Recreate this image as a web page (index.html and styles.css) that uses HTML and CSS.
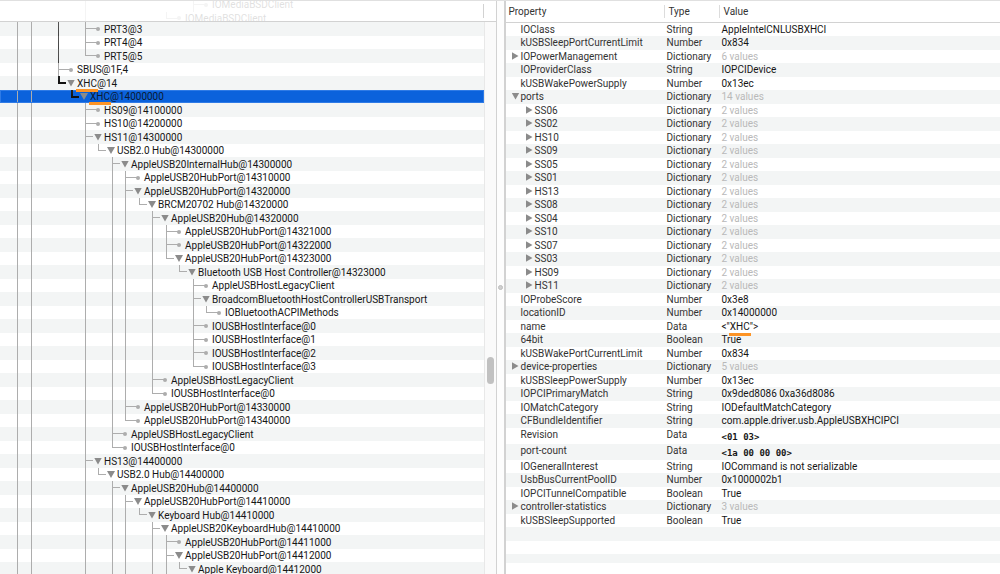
FILE: index.html
```html
<!DOCTYPE html>
<html lang="en">
<head>
<meta charset="utf-8">
<title>Registry Explorer</title>
<link rel="stylesheet" href="styles.css">
</head>
<body>
<main class="app">
  <section class="tree-pane">
    <header class="tree-head">
      <ul class="tree ghost">
        <li class="row"><i class="v"></i><i></i><i></i><i></i><i></i><i></i><i></i><i></i><i class="tee leaf"></i>IOMediaBSDClient</li>
        <li class="row"><i class="v"></i><i></i><i></i><i></i><i></i><i></i><i class="end leaf"></i>IOMediaBSDClient</li>
      </ul>
    </header>
    <div class="tree-body">
      <ul class="tree">
        <li class="row bus"><i class="tee leaf"></i>PRT3@3</li>
        <li class="row bus"><i class="tee leaf"></i>PRT4@4</li>
        <li class="row bus"><i class="end leaf"></i>PRT5@5</li>
        <li class="row bus top"><i class="tee leaf"></i>SBUS@1F,4</li>
        <li class="row top"><i class="end stem dark"></i><button><span class="mark">XHC</span>@14</button></li>
        <li class="row selected"><i class="end stem dark"></i><button><span class="mark">XHC</span>@14000000</button></li>
        <li class="row"><i class="tee leaf"></i>HS09@14100000</li>
        <li class="row"><i class="tee leaf"></i>HS10@14200000</li>
        <li class="row"><i class="tee stem"></i><button>HS11@14300000</button></li>
        <li class="row"><i class="v"></i><i class="end stem"></i><button>USB2.0 Hub@14300000</button></li>
        <li class="row"><i class="v"></i><i></i><i class="tee stem"></i><button>AppleUSB20InternalHub@14300000</button></li>
        <li class="row"><i class="v"></i><i></i><i class="v"></i><i class="tee leaf"></i>AppleUSB20HubPort@14310000</li>
        <li class="row"><i class="v"></i><i></i><i class="v"></i><i class="tee stem"></i><button>AppleUSB20HubPort@14320000</button></li>
        <li class="row"><i class="v"></i><i></i><i class="v"></i><i class="v"></i><i class="end stem"></i><button>BRCM20702 Hub@14320000</button></li>
        <li class="row"><i class="v"></i><i></i><i class="v"></i><i class="v"></i><i></i><i class="tee stem"></i><button>AppleUSB20Hub@14320000</button></li>
        <li class="row"><i class="v"></i><i></i><i class="v"></i><i class="v"></i><i></i><i class="v"></i><i class="tee leaf"></i>AppleUSB20HubPort@14321000</li>
        <li class="row"><i class="v"></i><i></i><i class="v"></i><i class="v"></i><i></i><i class="v"></i><i class="tee leaf"></i>AppleUSB20HubPort@14322000</li>
        <li class="row"><i class="v"></i><i></i><i class="v"></i><i class="v"></i><i></i><i class="v"></i><i class="end stem"></i><button>AppleUSB20HubPort@14323000</button></li>
        <li class="row"><i class="v"></i><i></i><i class="v"></i><i class="v"></i><i></i><i class="v"></i><i></i><i class="end stem"></i><button>Bluetooth USB Host Controller@14323000</button></li>
        <li class="row"><i class="v"></i><i></i><i class="v"></i><i class="v"></i><i></i><i class="v"></i><i></i><i></i><i class="tee leaf"></i>AppleUSBHostLegacyClient</li>
        <li class="row"><i class="v"></i><i></i><i class="v"></i><i class="v"></i><i></i><i class="v"></i><i></i><i></i><i class="tee stem"></i><button>BroadcomBluetoothHostControllerUSBTransport</button></li>
        <li class="row"><i class="v"></i><i></i><i class="v"></i><i class="v"></i><i></i><i class="v"></i><i></i><i></i><i class="v"></i><i class="end leaf"></i>IOBluetoothACPIMethods</li>
        <li class="row"><i class="v"></i><i></i><i class="v"></i><i class="v"></i><i></i><i class="v"></i><i></i><i></i><i class="tee leaf"></i>IOUSBHostInterface@0</li>
        <li class="row"><i class="v"></i><i></i><i class="v"></i><i class="v"></i><i></i><i class="v"></i><i></i><i></i><i class="tee leaf"></i>IOUSBHostInterface@1</li>
        <li class="row"><i class="v"></i><i></i><i class="v"></i><i class="v"></i><i></i><i class="v"></i><i></i><i></i><i class="tee leaf"></i>IOUSBHostInterface@2</li>
        <li class="row"><i class="v"></i><i></i><i class="v"></i><i class="v"></i><i></i><i class="v"></i><i></i><i></i><i class="end leaf"></i>IOUSBHostInterface@3</li>
        <li class="row"><i class="v"></i><i></i><i class="v"></i><i class="v"></i><i></i><i class="tee leaf"></i>AppleUSBHostLegacyClient</li>
        <li class="row"><i class="v"></i><i></i><i class="v"></i><i class="v"></i><i></i><i class="end leaf"></i>IOUSBHostInterface@0</li>
        <li class="row"><i class="v"></i><i></i><i class="v"></i><i class="tee leaf"></i>AppleUSB20HubPort@14330000</li>
        <li class="row"><i class="v"></i><i></i><i class="v"></i><i class="end leaf"></i>AppleUSB20HubPort@14340000</li>
        <li class="row"><i class="v"></i><i></i><i class="tee leaf"></i>AppleUSBHostLegacyClient</li>
        <li class="row"><i class="v"></i><i></i><i class="end leaf"></i>IOUSBHostInterface@0</li>
        <li class="row"><i class="tee stem"></i><button>HS13@14400000</button></li>
        <li class="row"><i class="v"></i><i class="end stem"></i><button>USB2.0 Hub@14400000</button></li>
        <li class="row"><i class="v"></i><i></i><i class="tee stem"></i><button>AppleUSB20Hub@14400000</button></li>
        <li class="row"><i class="v"></i><i></i><i class="v"></i><i class="tee stem"></i><button>AppleUSB20HubPort@14410000</button></li>
        <li class="row"><i class="v"></i><i></i><i class="v"></i><i class="v"></i><i class="end stem"></i><button>Keyboard Hub@14410000</button></li>
        <li class="row"><i class="v"></i><i></i><i class="v"></i><i class="v"></i><i></i><i class="tee stem"></i><button>AppleUSB20KeyboardHub@14410000</button></li>
        <li class="row"><i class="v"></i><i></i><i class="v"></i><i class="v"></i><i></i><i class="v"></i><i class="tee leaf"></i>AppleUSB20HubPort@14411000</li>
        <li class="row"><i class="v"></i><i></i><i class="v"></i><i class="v"></i><i></i><i class="v"></i><i class="tee stem"></i><button>AppleUSB20HubPort@14412000</button></li>
        <li class="row"><i class="v"></i><i></i><i class="v"></i><i class="v"></i><i></i><i class="v"></i><i class="v"></i><i class="end stem"></i><button>Apple Keyboard@14412000</button></li>
      </ul>
      <div class="track"><div class="before"></div><div class="thumb"></div><div class="after"></div></div>
    </div>
  </section>
  <div class="splitter"><span class="grip"></span></div>
  <section class="props-pane">
    <table class="props">
      <colgroup><col class="c-name"><col class="c-type"><col></colgroup>
      <thead><tr><th><span>Property</span></th><th><span>Type</span></th><th><span>Value</span></th></tr></thead>
      <tbody>
        <tr><td>IOClass</td><td>String</td><td>AppleIntelCNLUSBXHCI</td></tr>
        <tr><td>kUSBSleepPortCurrentLimit</td><td>Number</td><td>0x834</td></tr>
        <tr class="dict"><td><button>IOPowerManagement</button></td><td>Dictionary</td><td>6 values</td></tr>
        <tr><td>IOProviderClass</td><td>String</td><td>IOPCIDevice</td></tr>
        <tr><td>kUSBWakePowerSupply</td><td>Number</td><td>0x13ec</td></tr>
        <tr class="dict expanded"><td><button>ports</button></td><td>Dictionary</td><td>14 values</td></tr>
        <tr class="dict sub"><td><button>SS06</button></td><td>Dictionary</td><td>2 values</td></tr>
        <tr class="dict sub"><td><button>SS02</button></td><td>Dictionary</td><td>2 values</td></tr>
        <tr class="dict sub"><td><button>HS10</button></td><td>Dictionary</td><td>2 values</td></tr>
        <tr class="dict sub"><td><button>SS09</button></td><td>Dictionary</td><td>2 values</td></tr>
        <tr class="dict sub"><td><button>SS05</button></td><td>Dictionary</td><td>2 values</td></tr>
        <tr class="dict sub"><td><button>SS01</button></td><td>Dictionary</td><td>2 values</td></tr>
        <tr class="dict sub"><td><button>HS13</button></td><td>Dictionary</td><td>2 values</td></tr>
        <tr class="dict sub"><td><button>SS08</button></td><td>Dictionary</td><td>2 values</td></tr>
        <tr class="dict sub"><td><button>SS04</button></td><td>Dictionary</td><td>2 values</td></tr>
        <tr class="dict sub"><td><button>SS10</button></td><td>Dictionary</td><td>2 values</td></tr>
        <tr class="dict sub"><td><button>SS07</button></td><td>Dictionary</td><td>2 values</td></tr>
        <tr class="dict sub"><td><button>SS03</button></td><td>Dictionary</td><td>2 values</td></tr>
        <tr class="dict sub"><td><button>HS09</button></td><td>Dictionary</td><td>2 values</td></tr>
        <tr class="dict sub"><td><button>HS11</button></td><td>Dictionary</td><td>2 values</td></tr>
        <tr><td>IOProbeScore</td><td>Number</td><td>0x3e8</td></tr>
        <tr><td>locationID</td><td>Number</td><td>0x14000000</td></tr>
        <tr><td>name</td><td>Data</td><td>&lt;"<span class="mark">XHC</span>"&gt;</td></tr>
        <tr><td>64bit</td><td>Boolean</td><td>True</td></tr>
        <tr><td>kUSBWakePortCurrentLimit</td><td>Number</td><td>0x834</td></tr>
        <tr class="dict"><td><button>device-properties</button></td><td>Dictionary</td><td>5 values</td></tr>
        <tr><td>kUSBSleepPowerSupply</td><td>Number</td><td>0x13ec</td></tr>
        <tr><td>IOPCIPrimaryMatch</td><td>String</td><td>0x9ded8086 0xa36d8086</td></tr>
        <tr><td>IOMatchCategory</td><td>String</td><td>IODefaultMatchCategory</td></tr>
        <tr><td>CFBundleIdentifier</td><td>String</td><td>com.apple.driver.usb.AppleUSBXHCIPCI</td></tr>
        <tr class="raw"><td>Revision</td><td>Data</td><td>&lt;01 03&gt;</td></tr>
        <tr class="raw"><td>port-count</td><td>Data</td><td>&lt;1a 00 00 00&gt;</td></tr>
        <tr><td>IOGeneralInterest</td><td>String</td><td>IOCommand is not serializable</td></tr>
        <tr><td>UsbBusCurrentPoolID</td><td>Number</td><td>0x1000002b1</td></tr>
        <tr><td>IOPCITunnelCompatible</td><td>Boolean</td><td>True</td></tr>
        <tr class="dict"><td><button>controller-statistics</button></td><td>Dictionary</td><td>3 values</td></tr>
        <tr><td>kUSBSleepSupported</td><td>Boolean</td><td>True</td></tr>
      </tbody>
    </table>
    <div class="stripe"></div>
    <div class="stripe"></div>
    <div class="stripe last"></div>
  </section>
</main>
</body>
</html>
```
FILE: styles.css
```css
:root {
  --guide: #adadad;
  --band: #f3f5f5;
  --line: #d2d2d2;
  --arrow: #8b8b8b;
}

* { box-sizing: border-box; }

body {
  margin: 0;
  background: #fff;
  color: #161616;
  font: 400 10px/13px Roboto, "Liberation Sans", sans-serif;
}

button {
  display: flex;
  align-items: center;
  padding: 0;
  border: 0;
  background: none;
  color: inherit;
  font: inherit;
  white-space: pre;
}

button::before {
  content: "";
  flex: none;
  width: 8px;
  height: 7px;
  margin-right: 2px;
  background: var(--arrow);
  clip-path: polygon(0 0, 100% 0, 50% 100%);
}

.app {
  display: flex;
  height: 100vh;
  overflow: hidden;
  border-top: 1px solid #e0e0e0;
}

/* Device tree */
.tree-pane {
  flex: 496 1 0;
  min-width: 0;
  display: flex;
  flex-direction: column;
  border-right: 1px solid var(--line);
}

.tree-head {
  display: flex;
  flex: none;
  align-items: center;
  height: 21px;
  overflow: hidden;
  background: linear-gradient(var(--line), var(--line)) right 12px top 3px / 1px 14px no-repeat;
  border-bottom: 1px solid var(--line);
}

.tree-body {
  display: flex;
  flex: 1;
  min-height: 0;
}

.tree {
  flex: 1;
  min-width: 0;
  margin: 0;
  padding: 0;
  list-style: none;
  overflow: hidden;
}

.ghost { opacity: 0.13; }
.tree.ghost .row { background: none; }

.row {
  display: flex;
  align-items: center;
  height: 13px;
  padding-left: 85px;
  white-space: pre;
  background:
    linear-gradient(var(--guide), var(--guide)) 17px 0 / 1px 100% no-repeat,
    linear-gradient(var(--guide), var(--guide)) 31px 0 / 1px 100% no-repeat;
}

.row:nth-child(odd) {
  height: 14px;
  background-color: var(--band);
}

.row.bus {
  background-image:
    linear-gradient(var(--guide), var(--guide)),
    linear-gradient(var(--guide), var(--guide)),
    linear-gradient(#555, #444);
  background-position: 17px 0, 31px 0, 58px 0;
  background-size: 1px 100%;
}

.row.top { padding-left: 58px; }

.row.selected {
  padding-left: 71px;
  background-color: #0b62dc;
  box-shadow: inset 0 0 0 1px #2f7be6;
  color: #0a1a33;
}

.row i {
  flex: none;
  align-self: stretch;
  width: 14px;
}

.row i:nth-child(odd) { width: 13px; }

.row .v { border-left: 1px solid var(--guide); }

.row .stem,
.row .leaf {
  background:
    linear-gradient(var(--guide), var(--guide)) 0 0 / 1px 100% no-repeat,
    linear-gradient(var(--guide), var(--guide)) 0 6px / 12px 1px no-repeat;
}

.row .end { background-size: 1px 7px, 12px 1px; }
.row i.stem:nth-child(n) { width: 9px; }
.row .stem.tee { background-size: 1px 100%, 8px 1px; }
.row .stem.end { background-size: 1px 7px, 8px 1px; }

.row i.leaf:nth-child(n) {
  display: flex;
  align-items: center;
  width: 19px;
}

.leaf::after {
  content: "";
  width: 4px;
  height: 4px;
  margin-left: 11px;
  border-radius: 2px;
  background: var(--guide);
}

.row .stem.dark {
  background-image: linear-gradient(#222, #111), linear-gradient(#111, #111);
  background-size: 2px 7px, 8px 2px;
}

.mark { position: relative; }

.mark::after {
  content: "";
  position: absolute;
  left: -1px;
  right: -1px;
  top: 12px;
  height: 3px;
  background: #fd9426;
}

.track {
  display: flex;
  flex-direction: column;
  align-items: center;
  flex: none;
  width: 12px;
  background: #fafafa;
  border-left: 1px solid #e8e8e8;
}

.before { flex: 336; }
.after { flex: 190; }

.thumb {
  flex: none;
  width: 7px;
  height: 27px;
  border-radius: 4px;
  background: #c1c1c1;
}

.splitter {
  display: flex;
  align-items: center;
  justify-content: center;
  flex: none;
  width: 9px;
  background: #fdfdfd;
  border-right: 2px solid var(--line);
}

.grip {
  width: 5px;
  height: 5px;
  border-radius: 3px;
  background: #d0d0d0;
  border: 1px solid #bdbdbd;
}

/* Property table */
.props-pane {
  flex: 495 1 0;
  min-width: 0;
}

.props {
  width: 100%;
  table-layout: fixed;
  border-collapse: collapse;
}

.c-name { width: 158px; }
.c-type { width: 55px; }

th {
  height: 21px;
  padding: 0;
  border-bottom: 1px solid var(--line);
  color: #333;
  font-weight: 400;
  text-align: left;
}

th span {
  display: block;
  padding-left: 4px;
  border-left: 1px solid #dcdcdc;
}

th:first-child span {
  padding-left: 3px;
  border-left: 0;
}

td {
  height: 13px;
  padding: 0 0 0 3px;
  vertical-align: top;
  white-space: pre;
  color: #333;
}

td:first-child { padding-left: 15px; }
td:last-child { color: #161616; }

tbody tr:nth-child(even) { background: var(--band); }
tbody tr:nth-child(even) td { height: 14px; }

.dict td:first-child { padding-left: 6px; }
.dict.sub td:first-child { padding-left: 20px; }
.dict td:last-child { color: #b9b9b9; }

.dict button::before {
  width: 7px;
  height: 8px;
  clip-path: polygon(0 0, 100% 50%, 0 100%);
}

.dict.expanded button::before {
  width: 8px;
  height: 7px;
  margin-right: 1px;
  clip-path: polygon(0 0, 100% 0, 50% 100%);
}

tbody tr.raw td { height: 16px; }

.raw td:last-child {
  padding-top: 3px;
  font: 700 9px/13px "DejaVu Sans Mono", monospace;
}

.stripe {
  height: 14px;
  background: var(--band);
}

.stripe + .stripe {
  height: 13px;
  background: none;
}

.stripe.last {
  height: 9px;
  background: var(--band);
}
```
